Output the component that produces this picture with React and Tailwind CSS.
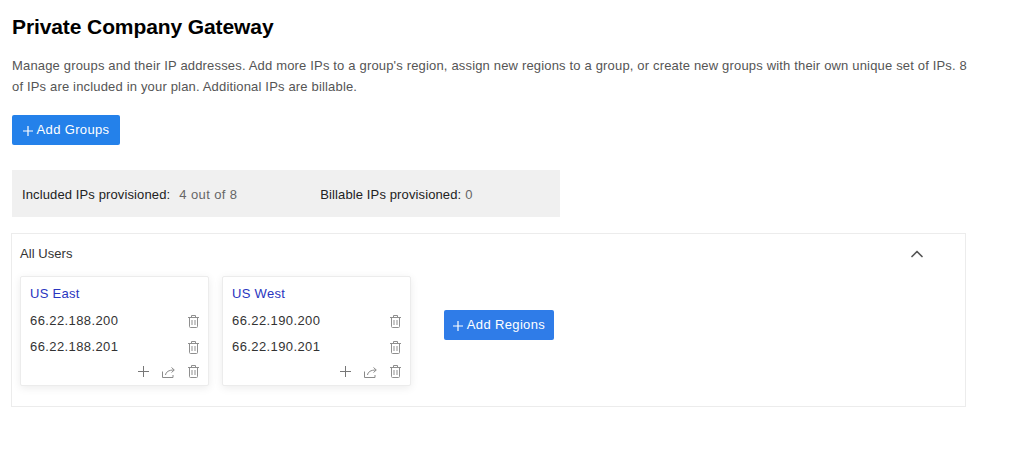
import { ChevronUp } from 'lucide-react';

/* Trash can as drawn in the reference */
function TrashIcon() {
  return (
    <svg width="11" height="13" viewBox="0 0 11 13" fill="none" stroke="#8f8f8f" strokeWidth="1" className="shrink-0">
      <path d="M0 2.500h11M3.500 2.500V.5h4v2M1.500 2.500v9a1 1 0 0 0 1 1h6a1 1 0 0 0 1-1v-9M4 5v5M7 5v5" />
    </svg>
  );
}

function ShareIcon() {
  return (
    <svg width="13" height="12" viewBox="0 0 13 12" fill="none" stroke="#8a8a8a" strokeWidth="1" className="shrink-0">
      <path d="M.5 5.500v6h10.500V9M3.500 9C4 6 6.500 4 12 4M9.500 1.500 12.300 4 9.500 6.500" />
    </svg>
  );
}

function PlusIcon({ size, color, weight, className }) {
  const mid = size / 2;
  return (
    <svg width={size} height={size} viewBox={`0 0 ${size} ${size}`} fill="none" stroke={color} strokeWidth={weight} className={className}>
      <path d={`M0 ${mid}H${size}M${mid} 0V${size}`} />
    </svg>
  );
}

function RegionCard({ name, ips }) {
  return (
    <div className="w-[189px] h-[110px] bg-white border border-[#ececec] rounded-[2px] shadow-[0_2px_8px_rgba(0,0,0,0.08)] pl-[9px] pr-[9px] pt-[8px]">
      <p className="text-[13px] leading-[18px] tracking-[0.3px] text-[#2a35c0]">{name}</p>
      <div className="mt-[9px] flex flex-col gap-[8px]">
        {ips.map(ip => (
          <div key={ip} className="flex items-center justify-between h-[18px]">
            <span className="text-[13px] leading-[18px] tracking-[0.4px] text-[#333]">{ip}</span>
            <TrashIcon />
          </div>
        ))}
      </div>
      <div className="mt-[9px] flex items-center justify-end gap-[13px]">
        <PlusIcon size={11} color="#777" weight={1} />
        <ShareIcon />
        <TrashIcon />
      </div>
    </div>
  );
}

export default function App() {
  return (
    <div className="w-[1019px] h-[451px] bg-white overflow-hidden pl-[12px] pt-[14px] font-['Liberation_Sans',sans-serif]">
      <h1 className="text-[21px] leading-[26px] tracking-[-0.1px] font-bold text-black">Private Company Gateway</h1>

      <p className="mt-[15px] w-[960px] text-[13px] leading-[21px] tracking-[0.17px] text-[#555]">
        Manage groups and their IP addresses. Add more IPs to a group's region, assign new regions to a group, or create new groups with their own unique set of IPs. 8 of IPs are included in your plan. Additional IPs are billable.
      </p>

      <button className="mt-[18px] w-[108px] h-[30px] bg-[#2481ea] rounded-[2px] text-white text-[13px] tracking-[0.35px] flex items-center justify-center gap-[4px]">
        <PlusIcon size={10} color="#fff" weight={1.2} className="mt-[2px]" /> Add Groups
      </button>

      <div className="mt-[25px] w-[548px] h-[47px] bg-[#f0f0f0] pl-[10px] pt-[2px] flex items-center text-[13px]">
        <span className="tracking-[0.12px] text-[#222]">Included IPs provisioned:</span>
        <span className="ml-[9px] w-[141px] tracking-[0.4px] text-[#666]">4 out of 8</span>
        <span className="tracking-[0.12px] text-[#222]">Billable IPs provisioned:</span>
        <span className="ml-[4px] text-[#666]">0</span>
      </div>

      <div className="-ml-px mt-[16px] w-[955px] h-[174px] border border-[#ececec] pl-[8px] pt-[11px]">
        <div className="flex items-center justify-between h-[18px] pr-[38px]">
          <span className="text-[13px] tracking-[0.05px] text-[#333]">All Users</span>
          <ChevronUp size={20} strokeWidth={2} color="#555" />
        </div>
        <div className="mt-[13px] flex items-start gap-[13px]">
          <RegionCard name="US East" ips={['66.22.188.200', '66.22.188.201']} />
          <RegionCard name="US West" ips={['66.22.190.200', '66.22.190.201']} />
          <button className="ml-[20px] mt-[34px] w-[110px] h-[30px] bg-[#2f7ce8] rounded-[2px] text-white text-[13px] tracking-[0.35px] flex items-center justify-center gap-[4px]">
            <PlusIcon size={10} color="#fff" weight={1.2} className="mt-[2px]" /> Add Regions
          </button>
        </div>
      </div>
    </div>
  );
}
